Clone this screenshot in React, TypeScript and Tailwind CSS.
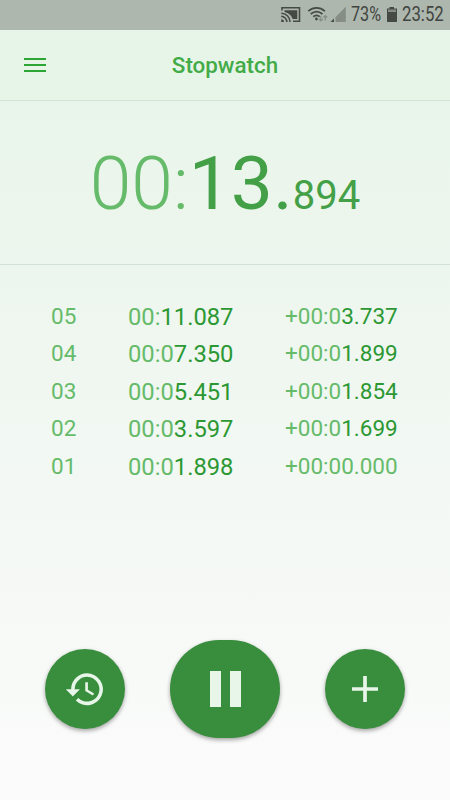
import React from "react";

const laps = [
  { n: "05", t: ["00:", "11.087"], d: ["+00:0", "3.737"] },
  { n: "04", t: ["00:0", "7.350"], d: ["+00:0", "1.899"] },
  { n: "03", t: ["00:0", "5.451"], d: ["+00:0", "1.854"] },
  { n: "02", t: ["00:0", "3.597"], d: ["+00:0", "1.699"] },
  { n: "01", t: ["00:0", "1.898"], d: ["+00:00.000", ""] },
];

function StatusBar() {
  return (
    <div className="flex h-[30px] shrink-0 items-center bg-[#aeb7ae] pl-[280px] text-[#414541]">
      <svg className="h-[30px] w-[70px] shrink-0" viewBox="280 0 70 30" fill="none" stroke="#454a45">
        <path d="M282 10.500V7.800h17.500v13.500h-6.500" strokeWidth="1.6" />
        <path d="M284.500 10.200h12.800v8.800h-4.700c-1-3.600-4-6.200-8.100-7z" fill="#454a45" stroke="none" />
        <path d="M281.200 13.200a8.800 8.800 0 0 1 8.800 8.800M281.200 16.400a5.600 5.600 0 0 1 5.600 5.600" strokeWidth="1.6" />
        <path d="M281.200 19.200a2.800 2.800 0 0 1 2.800 2.800h-2.800z" fill="#454a45" stroke="none" />
        <path d="M308.300 11.200c5-4.300 11.600-4.300 16.600 0M310.700 14c3.600-3 8.200-3 11.800 0M313.200 16.700c2.200-1.800 4.600-1.800 6.600 0" strokeWidth="1.700" />
        <circle cx="316.400" cy="19" r="1.400" fill="#454a45" stroke="none" />
        <path d="M320.800 16v5M318.900 19l1.900 2 1.900-2M325.300 20.500v-5M323.400 17.500l1.900-2 1.900 2" stroke="#858d85" strokeWidth="1.200" />
        <path d="M334 18.500V22h-3.500z" fill="#454a45" stroke="none" />
        <path d="M345.800 6.800V22h-10.300v-4.700z" fill="#858d85" stroke="none" />
      </svg>
      <span className="w-[37px] shrink-0 whitespace-nowrap pl-[1px]">
        <span className="inline-block origin-left scale-x-[0.83] text-[19.5px] leading-[30px]">73%</span>
      </span>
      <svg className="h-[30px] w-[15px] shrink-0" viewBox="387 0 15 30">
        <path d="M389.500 7h4.500v1.500h3V22h-10V8.500h2.500z" fill="#454a45" />
        <path d="M388 9.500h8v2.500h-8z" fill="#858d85" />
      </svg>
      <span className="w-[46px] shrink-0 whitespace-nowrap">
        <span className="inline-block origin-left scale-x-[0.86] text-[19.5px] leading-[30px]">23:52</span>
      </span>
    </div>
  );
}

const round =
  "flex items-center justify-center bg-[#388e3c] shadow-[0_2px_4px_rgba(0,0,0,0.35)]";

export default function App() {
  return (
    <div className="flex h-[800px] w-[450px] flex-col overflow-hidden bg-[#e8f5e9] font-['Roboto',sans-serif]">
      <StatusBar />
      <div className="flex min-h-0 flex-1 flex-col bg-linear-to-b from-[#e7f4e8] to-[#fbfbfb]">
        <header className="grid h-[71px] shrink-0 grid-cols-[1fr_auto_1fr] items-center border-b border-[#d0e2d3] bg-[#e7f5e8]">
          <button aria-label="Menu" className="ml-[24px] flex w-[22px] flex-col gap-[4px]">
            <span className="h-[2px] bg-[#2ea634]" />
            <span className="h-[2px] bg-[#2ea634]" />
            <span className="h-[2px] bg-[#2ea634]" />
          </button>
          <h1 className="text-[22.4px] font-medium leading-[30px] text-[#43ab48]">Stopwatch</h1>
        </header>
        <section className="flex h-[164px] shrink-0 items-baseline justify-center border-b border-[#d3e1d5] pr-px pt-[38px] text-[75px] leading-[88px] text-[#43a047]">
          <span className="font-light text-[#66bb6a]">00:</span>
          <span>13.</span>
          <span className="-mr-px text-[40px]">894</span>
        </section>
        <section className="flex flex-1 flex-col pt-[32.7px] text-[22.5px] text-[#66bb6a]">
          {laps.map((l) => (
            <div key={l.n} className="flex h-[37.5px] items-center leading-[37.5px]">
              <span className="ml-[51px] w-[77px]">{l.n}</span>
              <span className="w-[157px] pt-[2.5px] text-[23.75px]">
                {l.t[0]}
                <span className="text-[#2c9833]">{l.t[1]}</span>
              </span>
              <span>
                {l.d[0]}
                <span className="text-[#2c9833]">{l.d[1]}</span>
              </span>
            </div>
          ))}
        </section>
        <footer className="mb-[62px] flex h-[98px] shrink-0 items-center justify-center gap-[45px]">
          <button aria-label="Reset" className={`${round} size-[80px] rounded-full`}>
            <svg width="42.500" height="42.500" viewBox="0 0 24 24" fill="#e8f5e9">
              <path d="M13 3a9 9 0 0 0-9 9H1l3.890 3.890.070.140L9 12H6a7 7 0 1 1 2.060 4.940l-1.420 1.420A9 9 0 1 0 13 3zm-1 5v5l4.280 2.540.720-1.210-3.500-2.080V8z" />
            </svg>
          </button>
          <button aria-label="Pause" className={`${round} h-[98px] w-[110px] rounded-[49px]`}>
            <span className="flex gap-[9px]">
              <span className="h-[36px] w-[11px] bg-[#e8f5e9]" />
              <span className="h-[36px] w-[11px] bg-[#e8f5e9]" />
            </span>
          </button>
          <button aria-label="Add lap" className={`${round} size-[80px] rounded-full`}>
            <svg width="26" height="26" viewBox="0 0 26 26" stroke="#e8f5e9" strokeWidth="3.700">
              <path d="M0 13h26M13 0v26" />
            </svg>
          </button>
        </footer>
      </div>
    </div>
  );
}
